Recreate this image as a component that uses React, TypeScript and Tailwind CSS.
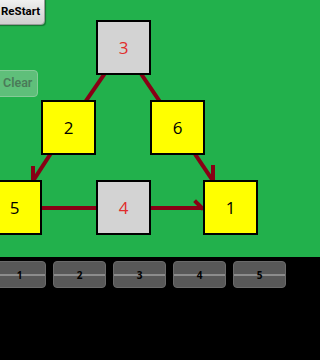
import React from 'react';

type Node = { id: string; left: number; top: number; gray?: boolean };

const nodes: Node[] = [
  { id: '3', left: 96, top: 20, gray: true },
  { id: '2', left: 41, top: 100 },
  { id: '6', left: 150, top: 100 },
  { id: '5', left: -13, top: 180 },
  { id: '4', left: 96, top: 180, gray: true },
  { id: '1', left: 203, top: 180 },
];

function Links() {
  return (
    <svg className="absolute left-0 top-0" width="240" height="257" viewBox="0 0 240 257">
      <g stroke="#880015" strokeWidth="4" fill="none" strokeLinecap="square">
        <line x1="123" y1="47" x2="68" y2="127" />
        <line x1="123" y1="47" x2="177" y2="127" />
        <line x1="68" y1="127" x2="33" y2="181" />
        <line x1="33" y1="181" x2="33" y2="168" />
        <line x1="177" y1="127" x2="213" y2="181" />
        <line x1="213" y1="181" x2="213" y2="167" />
        <line x1="14" y1="208" x2="203" y2="208" />
        <line x1="202" y1="208" x2="196" y2="202" />
      </g>
    </svg>
  );
}

export default function App() {
  const tabs = ['1', '2', '3', '4', '5'];

  return (
    <div className="w-full h-[360px] overflow-hidden bg-black flex flex-col" style={{ fontFamily: '"Open Sans", "Noto Sans", sans-serif' }}>
      {/* board */}
      <div className="relative h-[257px] shrink-0 bg-[#22b14c] overflow-hidden">
        <Links />

        {nodes.map((n) => (
          <div
            key={n.id}
            className={`absolute w-[55px] h-[55px] border-2 border-black flex items-center justify-center text-[17px] leading-none ${
              n.gray ? 'bg-[#d3d3d3] text-[#e02b2b]' : 'bg-[#ffff00] text-black'
            }`}
            style={{ left: n.left, top: n.top }}
          >
            {n.id}
          </div>
        ))}

        <button className="absolute left-[-6px] top-[-4px] w-[51px] h-[29px] pt-[3px] rounded-[4px] border border-[#9a9a9a] bg-gradient-to-b from-[#f4f4f4] to-[#cfcfcf] shadow-[1px_1px_1px_rgba(0,0,0,0.35)] text-[11.5px] font-bold text-black pl-[6px] text-left font-[Roboto]">
          ReStart
        </button>

        <button className="absolute left-[-6px] top-[70px] w-[44px] h-[27px] rounded-[4px] border border-[#86cb98] bg-[#5fbf7a] text-[12.5px] font-semibold text-[#4a7a58] pl-[8px] text-left font-[Roboto]">
          Clear
        </button>
      </div>

      {/* tab bar */}
      <div className="flex gap-[7px] ml-[-7px] pt-[4px]">
        {tabs.map((t) => (
          <div
            key={t}
            className="relative shrink-0 w-[53px] h-[27px] rounded-[4px] bg-[#585858] border border-[#6a6a6a] flex items-center justify-center"
          >
            <div className="absolute left-0 right-0 top-[12px] h-[2px] bg-[#8c8c8c]" />
            <span className="relative text-[10px] font-bold text-black leading-none">{t}</span>
          </div>
        ))}
      </div>
    </div>
  );
}
